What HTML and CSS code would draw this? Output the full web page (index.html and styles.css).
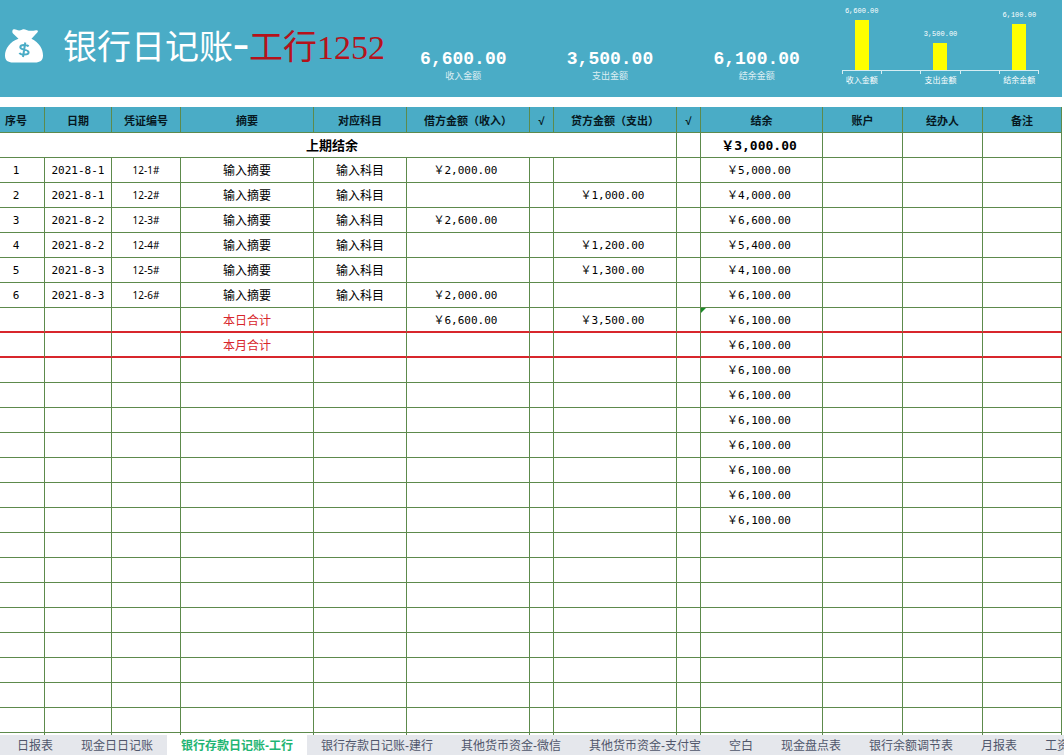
FILE: index.html
```html
<!DOCTYPE html>
<html lang="zh-CN">
<head>
    <meta charset="UTF-8">
    <meta name="viewport" content="width=device-width, initial-scale=1">
    <title>银行日记账</title>
    <link rel="stylesheet" href="styles.css">
</head>
<body>

    <div class="sheet">
        <header class="banner">
            <svg class="bag" viewBox="0 0 38 34" aria-hidden="true">
                <path d="M7.5 1.5C8 0 10 .2 11.500 .8C13.500 1.700 15 1.600 17 .7C18.500 .1 20 .3 21.500 1C24 2 27 2.200 31 1.200C33 .8 33.500 2.200 32.300 3.600L26.500 9.800C34 13.500 38 20 38 26.500C38 31.500 35 33.500 30 33.500H8C3 33.500 0 31.500 0 26.500C0 20 5 12.500 13.500 9.800L8 4.500C7.200 3.500 7.200 2.500 7.500 1.500Z" fill="#fff"/>
                <path d="M23.500 17.500C22.500 15.800 15.300 15.200 15.300 18.300C15.300 21.200 23.600 20 23.600 23.300C23.600 26.500 15.500 26 14.500 23.800M20.300 13.500L18 28" fill="none" stroke="#4aacc6" stroke-width="2"/>
            </svg>
            <h1 class="title">银行日记账<span class="dash">-</span><span class="bank">工行1252</span></h1>

            <div class="totals">
                <div class="total"><strong>6,600.00</strong><span>收入金额</span></div>
                <div class="total"><strong>3,500.00</strong><span>支出金额</span></div>
                <div class="total"><strong>6,100.00</strong><span>结余金额</span></div>
            </div>

            <div class="chart">
                <div class="plot">
                    <div class="slot"><span class="value">6,600.00</span><div class="bar" style="height: 50px"></div></div>
                    <div class="slot"></div>
                    <div class="slot"><span class="value">3,500.00</span><div class="bar" style="height: 27px"></div></div>
                    <div class="slot"></div>
                    <div class="slot"><span class="value">6,100.00</span><div class="bar" style="height: 46px"></div></div>
                </div>
                <div class="axis"><i></i><i></i><i></i><i></i><i></i></div>
                <div class="labels"><span>收入金额</span><span></span><span>支出金额</span><span></span><span>结余金额</span></div>
            </div>
        </header>

        <main class="grid-area">
            <table class="ledger">
                <colgroup>
                    <col class="c-no"><col class="c-date"><col class="c-voucher"><col class="c-summary"><col class="c-subject">
                    <col class="c-amount"><col class="c-tick"><col class="c-amount"><col class="c-tick"><col class="c-balance">
                    <col class="c-other"><col class="c-other"><col class="c-last">
                </colgroup>
                <thead>
                    <tr>
                        <th class="no">序号</th>
                        <th>日期</th>
                        <th>凭证编号</th>
                        <th>摘要</th>
                        <th>对应科目</th>
                        <th>借方金额（收入）</th>
                        <th>√</th>
                        <th>贷方金额（支出）</th>
                        <th>√</th>
                        <th>结余</th>
                        <th>账户</th>
                        <th>经办人</th>
                        <th>备注</th>
                    </tr>
                </thead>
                <tbody id="rows">
                    <tr class="opening">
                        <td colspan="8" class="opening-label">上期结余</td>
                        <td></td>
                        <td class="money">￥3,000.00</td>
                        <td></td>
                        <td></td>
                        <td></td>
                    </tr>
                </tbody>
            </table>
        </main>

        <nav class="tabs">
            <button type="button">日报表</button>
            <button type="button">现金日日记账</button>
            <button type="button" class="active">银行存款日记账-工行</button>
            <button type="button">银行存款日记账-建行</button>
            <button type="button">其他货币资金-微信</button>
            <button type="button">其他货币资金-支付宝</button>
            <button type="button">空白</button>
            <button type="button">现金盘点表</button>
            <button type="button">银行余额调节表</button>
            <button type="button">月报表</button>
            <button type="button">工资</button>
        </nav>
    </div>

    <script src="script.js"></script>
</body>
</html>
```

FILE: styles.css
```css
* {
    box-sizing: border-box;
}

body {
    margin: 0;
    background-color: #fff;
    color: #000;
    font-family: "Liberation Sans", "Noto Sans CJK SC", sans-serif;
}

.sheet {
    display: flex;
    flex-direction: column;
    height: 100vh;
    overflow: hidden;
}

/* Banner */
.banner {
    display: flex;
    flex: none;
    height: 97px;
    margin-right: 2px;
    padding-left: 5px;
    background-color: #4aacc6;
    color: #fff;
}

.bag {
    flex: none;
    width: 38px;
    height: 34px;
    margin-top: 29px;
}

.title {
    flex: none;
    width: 347px;
    margin: 0;
    padding: 23px 0 0 20px;
    font-family: "Liberation Serif", "Noto Sans CJK SC", serif;
    font-size: 34px;
    font-weight: 400;
    line-height: 50px;
    white-space: nowrap;
}

.dash {
    font-size: 48px;
    line-height: 34px;
}

.bank {
    color: #b5121b;
}

.totals {
    display: grid;
    grid-template-columns: repeat(3, 1fr);
    flex: 1;
    padding-top: 48px;
}

.total {
    display: flex;
    flex-direction: column;
    align-items: center;
}

.total strong {
    font-family: "Liberation Mono", monospace;
    font-size: 18px;
    line-height: 22px;
}

.total span {
    font-size: 9px;
    line-height: 12px;
    opacity: 0.8;
}

/* Bar chart */
.chart {
    flex: none;
    width: 197px;
    margin: 0 23px 0 12px;
}

.plot,
.axis,
.labels {
    display: grid;
    grid-template-columns: repeat(5, 1fr);
}

.plot {
    height: 70px;
}

.slot {
    display: flex;
    flex-direction: column;
    align-items: center;
    justify-content: flex-end;
}

.value {
    font-family: "Liberation Mono", monospace;
    font-size: 7px;
    line-height: 10px;
    margin-bottom: 4px;
}

.bar {
    width: 14px;
    background-color: #ff0;
}

.axis {
    height: 4px;
    border-top: 1px solid #d5edf3;
    border-right: 1px solid #d5edf3;
}

.axis i {
    border-left: 1px solid #d5edf3;
}

.labels {
    font-size: 8px;
    line-height: 14px;
    text-align: center;
    white-space: nowrap;
}

/* Ledger table */
.grid-area {
    flex: 1;
    min-height: 0;
    margin: 10px 2px 0 0;
    overflow: hidden;
}

.ledger {
    width: 100%;
    table-layout: fixed;
    border-collapse: separate;
    border-spacing: 0;
}

.c-no { width: 45px; }
.c-date { width: 67px; }
.c-voucher { width: 69px; }
.c-summary { width: 133px; }
.c-subject { width: 93px; }
.c-amount { width: 123px; }
.c-tick { width: 24px; }
.c-balance { width: 122px; }
.c-other { width: 80px; }
.c-last { width: 79px; }

.ledger th,
.ledger td {
    height: 25px;
    padding: 2px 0 0;
    border-right: 1px solid #5d8a4c;
    border-bottom: 1px solid #5d8a4c;
    font-size: 12px;
    line-height: 20px;
    text-align: center;
    white-space: nowrap;
}

.ledger th {
    height: 26px;
    padding-top: 3px;
    background-color: #4aacc6;
    color: #06181f;
    font-size: 11px;
}

.ledger .no {
    padding-right: 12px;
}

.ledger td.no,
.ledger .date,
.ledger .money {
    font-family: "DejaVu Sans Mono", "Noto Sans CJK SC", monospace;
    font-size: 11px;
}

.ledger .money {
    padding-right: 5px;
}

.ledger .voucher {
    padding-top: 0;
    font-family: "Noto Sans", sans-serif;
    font-size: 10px;
}

.ledger .opening td {
    font-size: 13px;
    font-weight: bold;
}

.ledger .opening-label {
    padding-right: 12px;
}

.ledger .subtotal td {
    border-bottom: 2px solid #d8262c;
}

.ledger .subtotal .summary {
    color: #d8262c;
}

/* green corner of a cell with a formula hint */
.ledger .flag {
    background: linear-gradient(135deg, #1a8a2a 3px, transparent 4px);
}

/* Sheet tabs */
.tabs {
    display: flex;
    flex: none;
    height: 20px;
    padding-left: 3px;
    overflow: hidden;
    background-color: #e5e7ec;
}

.tabs button {
    flex: none;
    padding: 2px 14px 0;
    border: 0;
    background: none;
    color: #50566b;
    font-family: inherit;
    font-size: 12px;
    line-height: 18px;
}

.tabs .active {
    background-color: #fff;
    color: #1fb573;
    font-weight: bold;
}
```

FILE: script.js
```javascript
const columns = ['no', 'date', 'voucher', 'summary', 'subject', 'money', '', 'money', '', 'money', '', '', ''];
const totalRows = 24;

const entries = [
    ['1', '2021-8-1', '12-1#', '输入摘要', '输入科目', '￥2,000.00', '', '', '', '￥5,000.00'],
    ['2', '2021-8-1', '12-2#', '输入摘要', '输入科目', '', '', '￥1,000.00', '', '￥4,000.00'],
    ['3', '2021-8-2', '12-3#', '输入摘要', '输入科目', '￥2,600.00', '', '', '', '￥6,600.00'],
    ['4', '2021-8-2', '12-4#', '输入摘要', '输入科目', '', '', '￥1,200.00', '', '￥5,400.00'],
    ['5', '2021-8-3', '12-5#', '输入摘要', '输入科目', '', '', '￥1,300.00', '', '￥4,100.00'],
    ['6', '2021-8-3', '12-6#', '输入摘要', '输入科目', '￥2,000.00', '', '', '', '￥6,100.00'],
    ['', '', '', '本日合计', '', '￥6,600.00', '', '￥3,500.00', '', '￥6,100.00'],
    ['', '', '', '本月合计', '', '', '', '', '', '￥6,100.00']
];

// balance is carried down for the next seven rows
for (let i = 0; i < 7; i++) {
    entries.push(['', '', '', '', '', '', '', '', '', '￥6,100.00']);
}

const body = document.getElementById('rows');

for (let r = 0; r < totalRows; r++) {
    const entry = entries[r] || [];
    const tr = document.createElement('tr');
    if (r === 6 || r === 7) {
        tr.className = 'subtotal';
    }
    columns.forEach(function (name, c) {
        const td = document.createElement('td');
        td.className = name;
        td.textContent = entry[c] || '';
        if (r === 6 && c === 9) {
            td.classList.add('flag');
        }
        tr.appendChild(td);
    });
    body.appendChild(tr);
}
```
